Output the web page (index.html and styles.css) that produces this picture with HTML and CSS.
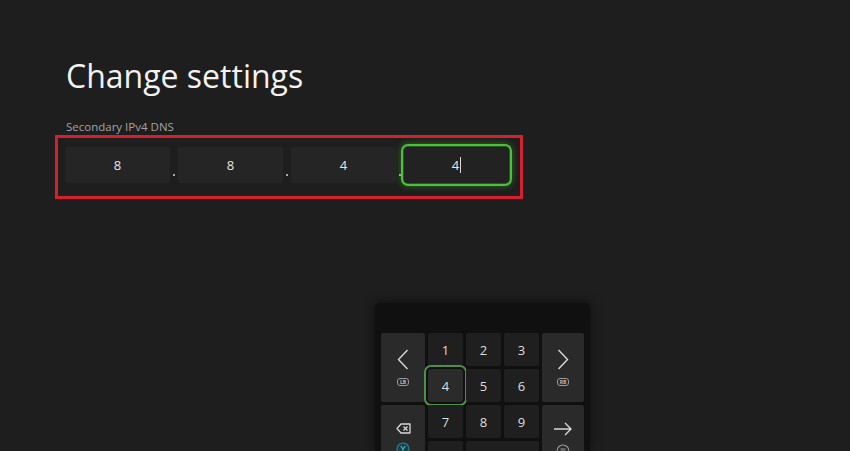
FILE: index.html
```html
<!DOCTYPE html>
<html lang="en">
<head>
    <meta charset="UTF-8">
    <meta name="viewport" content="width=device-width, initial-scale=1.0">
    <title>Change settings</title>
    <link rel="stylesheet" href="styles.css">
</head>
<body>
    <!-- Settings page -->
    <main class="page">
        <h1 class="title">Change settings</h1>
        <div class="field-label">Secondary IPv4 DNS</div>

        <div class="ip-row">
            <div class="octet">8</div>
            <span class="sep"></span>
            <div class="octet">8</div>
            <span class="sep"></span>
            <div class="octet">4</div>
            <span class="sep"></span>
            <div class="octet focused">4<span class="caret"></span></div>
        </div>
    </main>

    <!-- On-screen number pad -->
    <div class="keypad">
        <div class="keys">
            <div class="key side tall">
                <svg width="12" height="21" viewBox="0 0 12 21"><polyline points="10.5,1 1.5,10.5 10.5,20" fill="none" stroke="#d8d8d8" stroke-width="1.4"/></svg>
                <span class="badge">LB</span>
            </div>
            <div class="key">1</div>
            <div class="key">2</div>
            <div class="key">3</div>
            <div class="key side tall">
                <svg width="12" height="21" viewBox="0 0 12 21"><polyline points="1.5,1 10.5,10.5 1.5,20" fill="none" stroke="#d8d8d8" stroke-width="1.4"/></svg>
                <span class="badge">RB</span>
            </div>

            <div class="key active">4</div>
            <div class="key">5</div>
            <div class="key">6</div>

            <div class="key side tall">
                <svg width="15" height="11" viewBox="0 0 15 11"><path d="M5 1 H14 V10 H5 L1 5.5 Z" fill="none" stroke="#d8d8d8" stroke-width="1.3" stroke-linejoin="round"/><path d="M7.5 3.5 L11.5 7.5 M11.5 3.5 L7.5 7.5" stroke="#d8d8d8" stroke-width="1.3"/></svg>
                <svg width="14" height="14" viewBox="0 0 14 14"><circle cx="7" cy="7" r="6" fill="#17414a" stroke="#2b7f8e" stroke-width="1.2"/><path d="M4.8 4 L7 7 L9.2 4 M7 7 V10.5" fill="none" stroke="#4fb6c6" stroke-width="1.1"/></svg>
            </div>
            <div class="key">7</div>
            <div class="key">8</div>
            <div class="key">9</div>
            <div class="key side tall">
                <svg width="20" height="14" viewBox="0 0 20 14"><path d="M1 7 H18 M12 1 L18 7 L12 13" fill="none" stroke="#d8d8d8" stroke-width="1.4"/></svg>
                <svg width="14" height="14" viewBox="0 0 14 14"><circle cx="7" cy="7" r="6" fill="none" stroke="#9a9a9a" stroke-width="1.1"/><path d="M4.5 5 H9.5 M4.5 7 H9.5 M4.5 9 H9.5" stroke="#9a9a9a" stroke-width="1"/></svg>
            </div>

            <div class="key"></div>
            <div class="key wide"></div>
        </div>
    </div>
</body>
</html>
```

FILE: styles.css
```css
/* Global Styles */
* {
    margin: 0;
    padding: 0;
    box-sizing: border-box;
    font-family: 'Open Sans', 'Noto Sans', sans-serif;
}

body {
    background: #1e1e1e;
    width: 850px;
    height: 451px;
    overflow: hidden;
    position: relative;
}

/* Page */
.page {
    padding: 56px 0 0 55px;
}

.title {
    margin-left: 11px;
    font-size: 32px;
    line-height: 40px;
    font-weight: 400;
    color: #f2f2f2;
}

.field-label {
    margin: 23px 0 0 11px;
    font-size: 11.5px;
    line-height: 16px;
    color: #a3a3a3;
}

/* IP address row */
.ip-row {
    display: flex;
    width: 468px;
    height: 64px;
    padding: 9px 0 13px 7px;
    border: 3px solid #d4202e;
}

.octet {
    width: 105px;
    height: 36px;
    background: #252525;
    border-radius: 2px;
    display: flex;
    align-items: center;
    justify-content: center;
    font-size: 13px;
    color: #e6e6e6;
}

.octet.focused {
    background: #222;
    outline: 2px solid #4cc23a;
    outline-offset: 1px;
    border-radius: 4px;
    box-shadow: 0 0 7px 3px rgba(70, 200, 50, 0.45);
}

.caret {
    width: 1px;
    height: 16px;
    margin-left: 1px;
    background: #d8d8d8;
}

.sep {
    width: 8px;
    display: flex;
    justify-content: center;
    align-items: flex-end;
    padding-bottom: 7px;
}

.sep::after {
    content: "";
    width: 2px;
    height: 2px;
    background: #a8a8a8;
}

/* Keypad popup */
.keypad {
    position: absolute;
    left: 375px;
    top: 303px;
    width: 215px;
    height: 148px;
    overflow: hidden;
    padding: 30px 6px 0 6px;
    background: #101010;
    border-radius: 5px 5px 0 0;
    box-shadow: 0 0 12px rgba(0, 0, 0, 0.6);
}

.keys {
    display: grid;
    grid-template-columns: 44px 35px 35px 35px 42px;
    grid-template-rows: repeat(4, 33px);
    gap: 3px;
}

.key {
    background: #1f1f1f;
    border-radius: 2px;
    display: flex;
    align-items: center;
    justify-content: center;
    font-size: 13px;
    color: #dedede;
}

.key.side {
    background: #2a2a2a;
    flex-direction: column;
    gap: 8px;
}

.key.tall {
    grid-row: span 2;
}

.key.wide {
    grid-column: span 2;
}

.key.active {
    background: #2b2b2b;
    outline: 2px solid #4f8f47;
    outline-offset: 2px;
    border-radius: 3px;
}

.badge {
    font-size: 5px;
    line-height: 6px;
    font-weight: 700;
    color: #bbb;
    border: 1px solid #9a9a9a;
    border-radius: 3px;
    padding: 0 2px;
}
```
